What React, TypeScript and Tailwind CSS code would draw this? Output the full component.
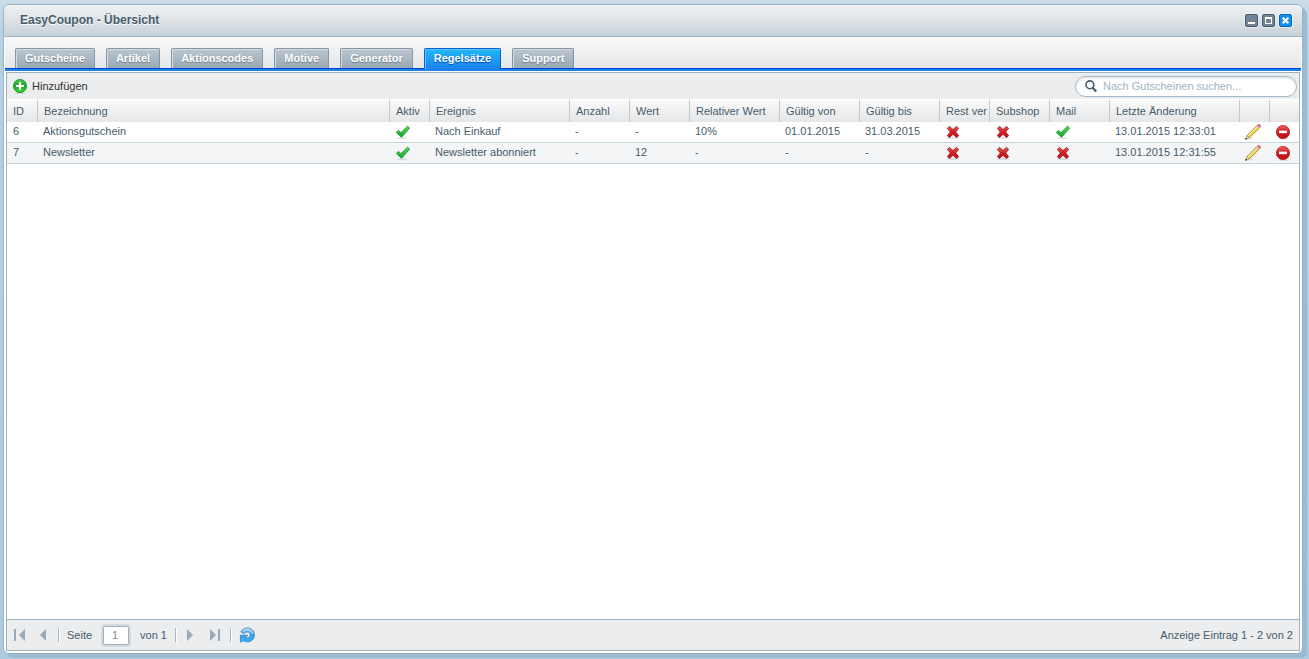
/**
 * EasyCoupon overview window
 * Tabs, toolbar, rule set grid and paging bar
 */

import React, { useState } from 'react';

interface RuleSet {
  id: number;
  name: string;
  active: boolean;
  event: string;
  count: string;
  value: string;
  relativeValue: string;
  validFrom: string;
  validTo: string;
  useRest: boolean;
  subshop: boolean;
  mail: boolean;
  changed: string;
}

const TABS = ['Gutscheine', 'Artikel', 'Aktionscodes', 'Motive', 'Generator', 'Regelsätze', 'Support'];

const COLUMNS = [
  { label: 'ID', width: 'w-[30px]' },
  { label: 'Bezeichnung', width: '' },
  { label: 'Aktiv', width: 'w-[40px]' },
  { label: 'Ereignis', width: 'w-[140px]' },
  { label: 'Anzahl', width: 'w-[60px]' },
  { label: 'Wert', width: 'w-[60px]' },
  { label: 'Relativer Wert', width: 'w-[90px]' },
  { label: 'Gültig von', width: 'w-[80px]' },
  { label: 'Gültig bis', width: 'w-[80px]' },
  { label: 'Rest ver', width: 'w-[50px]' },
  { label: 'Subshop', width: 'w-[60px]' },
  { label: 'Mail', width: 'w-[60px]' },
  { label: 'Letzte Änderung', width: 'w-[130px]' },
  { label: '', width: 'w-[30px]' },
  { label: '', width: 'w-[30px]' },
];

const RULE_SETS: RuleSet[] = [
  {
    id: 6,
    name: 'Aktionsgutschein',
    active: true,
    event: 'Nach Einkauf',
    count: '-',
    value: '-',
    relativeValue: '10%',
    validFrom: '01.01.2015',
    validTo: '31.03.2015',
    useRest: false,
    subshop: false,
    mail: true,
    changed: '13.01.2015 12:33:01',
  },
  {
    id: 7,
    name: 'Newsletter',
    active: true,
    event: 'Newsletter abonniert',
    count: '-',
    value: '12',
    relativeValue: '-',
    validFrom: '-',
    validTo: '-',
    useRest: false,
    subshop: false,
    mail: false,
    changed: '13.01.2015 12:31:55',
  },
];

const CheckIcon = () => (
  <svg className="block" width="16" height="16" viewBox="0 0 16 16" aria-hidden="true">
    <defs>
      <linearGradient id="check" x1="0" y1="0" x2="0" y2="1">
        <stop offset="0" stopColor="#5fd860" />
        <stop offset="1" stopColor="#12a524" />
      </linearGradient>
    </defs>
    <ellipse cx="7" cy="14.2" rx="5" ry="1" fill="#000" opacity="0.12" />
    <path d="M1.3 8.4 3.4 6.4 6 8.6 12.6 2.2 14.6 4.1 6.6 13.3Z" fill="url(#check)" stroke="#1b9a2b" strokeWidth="0.9" strokeLinejoin="round" />
  </svg>
);

const CrossIcon = () => (
  <svg className="block" width="16" height="16" viewBox="0 0 16 16" aria-hidden="true">
    <defs>
      <linearGradient id="cross" x1="0" y1="0" x2="0" y2="1">
        <stop offset="0" stopColor="#e86060" />
        <stop offset="0.5" stopColor="#cf1c20" />
        <stop offset="1" stopColor="#c4161a" />
      </linearGradient>
    </defs>
    <ellipse cx="8" cy="13.9" rx="6.5" ry="0.9" fill="#000" opacity="0.14" />
    <path
      d="M2.4 4.4 4.5 2.4 8 5.6 11.5 2.4 13.6 4.4 10.6 8 13.6 11.5 11.6 13.5 8 10.3 4.4 13.5 2.4 11.5 5.4 8Z"
      fill="url(#cross)"
      stroke="#a31418"
      strokeWidth="0.9"
      strokeLinejoin="round"
    />
  </svg>
);

const PencilIcon = () => (
  <svg className="block" width="16" height="16" viewBox="0 0 16 16" aria-hidden="true">
    <path d="M2.5 15.3 6 13.5 9 13.8 5.5 15.6Z" fill="#000" opacity="0.12" />
    <path d="M1.9 11.7 11.5 2 14 4.4 4.2 14Z" fill="#f3d950" stroke="#937a2a" strokeWidth="0.8" />
    <path d="M3 12 12.2 2.8" stroke="#fdf3ac" strokeWidth="1" />
    <path d="M1.9 11.7 4.2 14 0.5 15.4Z" fill="#f0dcb4" stroke="#9b8252" strokeWidth="0.5" />
    <path d="M0.2 15.8 0.9 13.6 2.4 15Z" fill="#222" />
    <path d="M11.3 2.2 12.3 1.2 14.8 3.6 13.8 4.6Z" fill="#d5dadd" stroke="#969da2" strokeWidth="0.4" />
    <path d="M12.3 1.2 13.2 0.4Q14 0 14.8 0.8L15.4 1.4Q16 2.2 15.5 2.9L14.8 3.6Z" fill="#ee6c6c" stroke="#cf4747" strokeWidth="0.5" />
  </svg>
);

const DeleteIcon = () => (
  <svg className="block" width="16" height="16" viewBox="0 0 16 16" aria-hidden="true">
    <defs>
      <linearGradient id="minus" x1="0" y1="0" x2="0" y2="1">
        <stop offset="0" stopColor="#ee6664" />
        <stop offset="0.5" stopColor="#cf191e" />
        <stop offset="1" stopColor="#c40f16" />
      </linearGradient>
    </defs>
    <ellipse cx="8" cy="14.9" rx="5" ry="0.8" fill="#000" opacity="0.12" />
    <circle cx="8" cy="8" r="6.6" fill="url(#minus)" stroke="#b41a1d" strokeWidth="0.8" />
    <rect x="3.8" y="6.2" width="8.4" height="3.2" fill="#fff" stroke="#a80f14" strokeWidth="0.5" />
  </svg>
);

const AddIcon = () => (
  <svg className="block" width="16" height="16" viewBox="0 0 16 16" aria-hidden="true">
    <defs>
      <linearGradient id="add" x1="0" y1="0" x2="0" y2="1">
        <stop offset="0" stopColor="#4cc552" />
        <stop offset="0.5" stopColor="#13a824" />
        <stop offset="1" stopColor="#35dc35" />
      </linearGradient>
    </defs>
    <ellipse cx="8" cy="15" rx="5" ry="0.8" fill="#000" opacity="0.16" />
    <circle cx="8" cy="8" r="6.6" fill="url(#add)" stroke="#189027" strokeWidth="0.8" />
    <path d="M6.9 4H9.1V6.9H12V9.1H9.1V12H6.9V9.1H4V6.9H6.9Z" fill="#fff" />
  </svg>
);

const SearchIcon = () => (
  <svg className="block" width="14" height="14" viewBox="0 0 14 14" aria-hidden="true">
    <circle cx="5.9" cy="5.8" r="3.9" fill="none" stroke="#475c6a" strokeWidth="1.6" />
    <path d="M8.7 8.7 12.2 12.4" stroke="#475c6a" strokeWidth="2.2" />
  </svg>
);

const RefreshIcon = () => (
  <svg className="block" width="16" height="16" viewBox="0 0 16 16" aria-hidden="true">
    <defs>
      <linearGradient id="refresh" x1="0" y1="0" x2="0" y2="1">
        <stop offset="0" stopColor="#b4daf2" />
        <stop offset="0.5" stopColor="#3f9ade" />
        <stop offset="1" stopColor="#38b4f6" />
      </linearGradient>
    </defs>
    <path
      d="M1.8 5C3.2 2.3 5.6 1 8.4 1 12.4 1 15.4 4 15.4 7.9 15.4 12 12.4 14.9 8.4 14.9 6.8 14.9 5.2 14.4 4 13.5L1.4 15.3V8.2H8.6L6.8 10.8C9.4 11.6 11.2 10 11.2 8 11.2 6.2 9.9 5 8.2 5 6.8 5 5.7 5.6 5.1 6.6Z"
      fill="url(#refresh)"
      stroke="#2a7fc6"
      strokeWidth="0.8"
      strokeLinejoin="round"
    />
    <path d="M3.6 4.6C5 2.8 7 2.2 8.8 2.4 11.4 2.7 13.4 4.6 13.8 7" fill="none" stroke="#d6ecfa" strokeWidth="0.7" />
  </svg>
);

const PageIcon: React.FC<{ type: 'first' | 'prev' | 'next' | 'last' }> = ({ type }) => (
  <svg className="block" width="16" height="16" viewBox="0 0 16 16" fill="#9caab5" aria-hidden="true">
    {type === 'first' && <path d="M2 2H4V14H2ZM13 2V14L7 8Z" />}
    {type === 'prev' && <path d="M11 2V14L5 8Z" />}
    {type === 'next' && <path d="M3 2V14L9 8Z" />}
    {type === 'last' && <path d="M3 2V14L9 8ZM11 2H13V14H11Z" />}
  </svg>
);

const ToolIcon: React.FC<{ type: 'minimize' | 'maximize' | 'close' }> = ({ type }) => (
  <svg className="block" width="15" height="15" viewBox="0 0 15 15" aria-hidden="true">
    <rect x="0.5" y="0.5" width="14" height="14" rx="2" fill="#fff" opacity="0.7" />
    <rect
      x="1.5"
      y="1.5"
      width="12"
      height="12"
      rx="1.5"
      fill={type === 'close' ? '#1191ea' : '#718596'}
      stroke={type === 'close' ? '#0a66c4' : '#4a5c6b'}
    />
    {type === 'minimize' && <path d="M4 9H11V11H4Z" fill="#fff" />}
    {type === 'maximize' && <path d="M4 4H11V11H4ZM5 6V10H10V6Z" fill="#fff" fillRule="evenodd" />}
    {type === 'close' && <path d="M4.7 4.7 10.3 10.3M10.3 4.7 4.7 10.3" stroke="#fff" strokeWidth="2.2" />}
  </svg>
);

const StatusCell: React.FC<{ value: boolean }> = ({ value }) => (
  <td className="border-b border-[#c9d5dd] px-1.5 pt-0.5 align-top">
    {value ? <CheckIcon /> : <CrossIcon />}
  </td>
);

const TextCell: React.FC<{ children: React.ReactNode }> = ({ children }) => (
  <td className="truncate border-b border-[#c9d5dd] px-1.5 pt-px align-top">{children}</td>
);

const ActionCell: React.FC<{ label: string; children: React.ReactNode }> = ({ label, children }) => (
  <td className="border-b border-[#c9d5dd] px-1.5 pt-0.5 align-top">
    <button type="button" aria-label={label} className="block cursor-pointer">
      {children}
    </button>
  </td>
);

const Separator = () => <span className="h-[14px] w-0.5 border-l border-[#a9b6c0] bg-white" />;

export default function App() {
  const [activeTab, setActiveTab] = useState('Regelsätze');
  const [search, setSearch] = useState('');
  const [page, setPage] = useState('1');

  return (
    <div className="flex h-screen flex-col bg-linear-to-b from-[#cbdde9] via-[#b6d1e6] via-5% to-[#accbe1] pt-1 pr-1.5 pb-[5px] pl-[3px] font-['Liberation_Sans',Arial,sans-serif] text-[11px] leading-4 text-[#475c6a]">
      <div className="flex min-h-0 flex-1 flex-col rounded-md border border-[#9db2c0] bg-white shadow-[4px_4px_0_#9bbbd2]">
        <header className="flex h-8 shrink-0 items-center justify-between rounded-t-md border-b border-[#9db2c0] bg-linear-to-b from-[#f0f2f3] to-[#c9d2d8] pr-[9px] pb-px pl-4">
          <h1 className="text-xs font-bold [text-shadow:0_1px_0_#fff]">EasyCoupon - Übersicht</h1>
          <div className="flex gap-0.5">
            <button type="button" aria-label="Minimieren"><ToolIcon type="minimize" /></button>
            <button type="button" aria-label="Maximieren"><ToolIcon type="maximize" /></button>
            <button type="button" aria-label="Schließen"><ToolIcon type="close" /></button>
          </div>
        </header>

        <main className="flex min-h-0 flex-1 flex-col px-px pb-0.5">
          <nav className="flex h-[34px] shrink-0 items-end border-b-2 border-[#1c82ea] bg-linear-to-b from-[#f8f8f8] to-[#e4e6e8] shadow-[inset_0_-1px_0_#0043d6]">
            <div className="flex items-end gap-[11px] pl-2.5">
              {TABS.map((tab) => (
                <button
                  key={tab}
                  type="button"
                  onClick={() => setActiveTab(tab)}
                  className={`rounded-t-xs border border-b-0 px-[9px] font-bold text-white ${tab === activeTab
                      ? 'h-[21px] border-[#0a5fe0] bg-linear-to-b from-[#22b8f8] to-[#1c82ea] pb-[3px] shadow-[inset_1px_1px_0_#5cc8fa] [text-shadow:0_1px_1px_#0046b8]'
                      : 'mb-px h-5 border-[#8796a4] bg-linear-to-b from-[#bcc6cf] to-[#9aa8b5] pb-0.5 shadow-[inset_1px_1px_0_#d3dae0] [text-shadow:0_1px_1px_#6c7c8a]'
                    }`}
                >
                  {tab}
                </button>
              ))}
            </div>
          </nav>

          <section className="mx-px mt-px flex min-h-0 flex-1 flex-col border border-[#9db2c0]">
            <div className="flex h-[26px] shrink-0 items-center justify-between bg-[#ebedef] pr-0.5 pl-[5px]">
              <button type="button" className="flex items-center gap-1 text-[#333]">
                <AddIcon />
                Hinzufügen
              </button>
              <label className="flex h-[21px] w-[222px] items-center gap-[5px] rounded-full border border-[#a3b6c3] bg-white pl-2 shadow-[inset_0_2px_2px_#e6eaed]">
                <SearchIcon />
                <input
                  type="text"
                  aria-label="Suche"
                  placeholder="Nach Gutscheinen suchen..."
                  value={search}
                  onChange={(e) => setSearch(e.target.value)}
                  className="min-w-0 flex-1 bg-transparent outline-none placeholder:text-[#a0b3c0]"
                />
              </label>
            </div>

            <div className="min-h-0 flex-1 overflow-auto">
              <table className="w-full table-fixed border-separate border-spacing-0 text-left">
                <thead>
                  <tr className="h-[23px]">
                    {COLUMNS.map((column, index) => (
                      <th
                        key={index}
                        className={`overflow-hidden border-t border-l border-t-white border-l-[#c5c9cc] bg-linear-to-b from-[#fafafa] to-[#e5e6e7] py-0 pl-1.5 font-normal whitespace-nowrap first:border-l-0 ${column.width}`}
                      >
                        {column.label}
                      </th>
                    ))}
                  </tr>
                </thead>
                <tbody>
                  {RULE_SETS.map((rule) => (
                    <tr key={rule.id} className="h-[21px] even:bg-[#f3f5f7]">
                      <TextCell>{rule.id}</TextCell>
                      <TextCell>{rule.name}</TextCell>
                      <StatusCell value={rule.active} />
                      <TextCell>{rule.event}</TextCell>
                      <TextCell>{rule.count}</TextCell>
                      <TextCell>{rule.value}</TextCell>
                      <TextCell>{rule.relativeValue}</TextCell>
                      <TextCell>{rule.validFrom}</TextCell>
                      <TextCell>{rule.validTo}</TextCell>
                      <StatusCell value={rule.useRest} />
                      <StatusCell value={rule.subshop} />
                      <StatusCell value={rule.mail} />
                      <TextCell>{rule.changed}</TextCell>
                      <ActionCell label="Bearbeiten"><PencilIcon /></ActionCell>
                      <ActionCell label="Löschen"><DeleteIcon /></ActionCell>
                    </tr>
                  ))}
                </tbody>
              </table>
            </div>

            <footer className="flex h-[31px] shrink-0 items-center justify-between border-t border-[#9db2c0] bg-[#ebedef] pr-1.5 pl-[5px]">
              <div className="flex items-center gap-2">
                <div className="flex items-center gap-[7px]">
                  <button type="button" aria-label="Erste Seite"><PageIcon type="first" /></button>
                  <button type="button" aria-label="Vorherige Seite"><PageIcon type="prev" /></button>
                  <Separator />
                  <label htmlFor="page">Seite</label>
                  <input
                    id="page"
                    type="text"
                    value={page}
                    onChange={(e) => setPage(e.target.value)}
                    className="mx-1 h-[19px] w-[26px] rounded-xs border border-[#a3b0ba] bg-white pl-2 text-[#7b8a96] ring-2 ring-[#d3dae0] outline-none"
                  />
                  <span>von 1</span>
                </div>
                <div className="flex items-center gap-[7px]">
                  <Separator />
                  <button type="button" aria-label="Nächste Seite"><PageIcon type="next" /></button>
                  <button type="button" aria-label="Letzte Seite"><PageIcon type="last" /></button>
                  <Separator />
                  <button type="button" aria-label="Aktualisieren"><RefreshIcon /></button>
                </div>
              </div>
              <span>Anzeige Eintrag 1 - 2 von 2</span>
            </footer>
          </section>
        </main>
      </div>
    </div>
  );
}
